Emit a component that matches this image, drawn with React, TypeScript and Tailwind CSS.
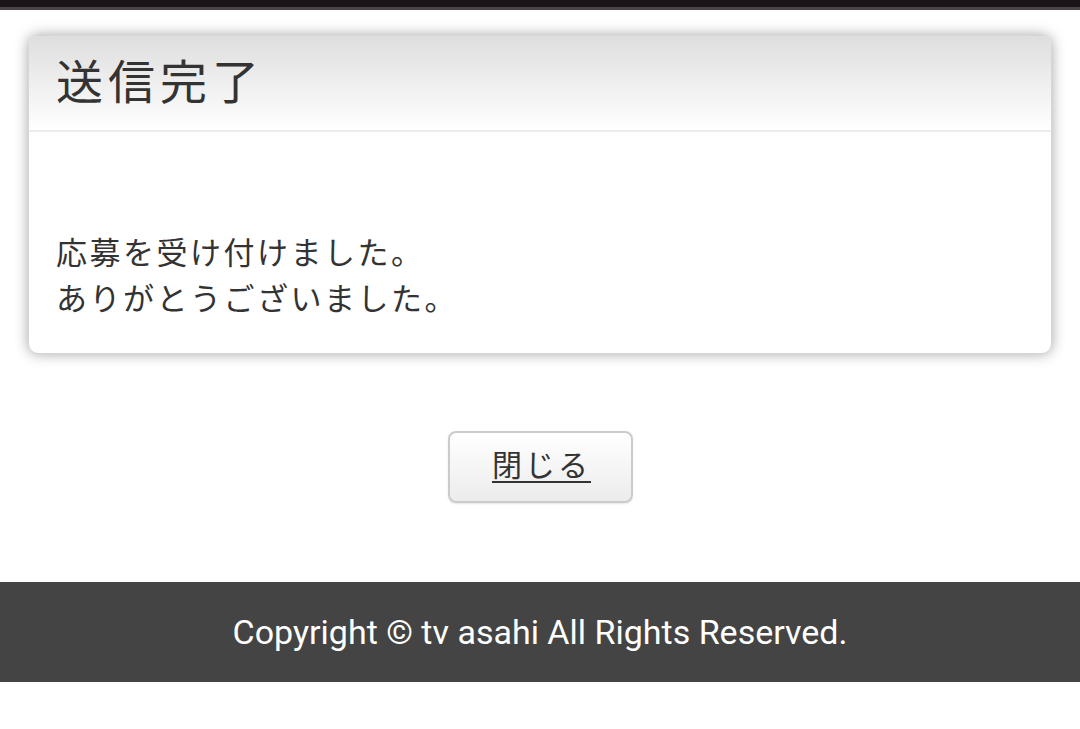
import React from 'react';

const jp = { fontFamily: '"Noto Sans CJK JP", "Noto Sans", sans-serif' };

export default function App() {
  return (
    <div className="min-h-[729px] bg-white" style={jp}>
      {/* top bar */}
      <div className="h-[7px] bg-[#1b1317]" />
      <div className="h-[3px] bg-[#4a4547]" />

      <main className="px-[28px] pt-[25px]">
        {/* result card */}
        <section className="rounded-[10px] border border-[#d6d6d6] bg-white shadow-[0_0_14px_rgba(0,0,0,0.35)] overflow-hidden">
          <div className="h-[96px] flex items-center px-[27px] bg-gradient-to-b from-[#dedede] to-white border-b-2 border-[#ececec]">
            <h1 className="text-[47px] leading-none tracking-[5px] text-[#333] pb-[10px]">送信完了</h1>
          </div>
          <div className="px-[27px] pt-[96px] pb-[33px] text-[31px] leading-[46px] tracking-[2.5px] text-[#333]">
            <p>応募を受け付けました。</p>
            <p>ありがとうございました。</p>
          </div>
        </section>

        <div className="flex justify-center pt-[77px] pb-[79px]">
          <button className="w-[185px] h-[72px] rounded-[8px] border-2 border-[#cbcbcb] bg-gradient-to-b from-white to-[#ececec] shadow-[0_1px_2px_rgba(0,0,0,0.1)] text-[30px] tracking-[3px] text-[#333] underline underline-offset-[5px] decoration-2 pb-[8px] pl-[3px]">
            閉じる
          </button>
        </div>
      </main>

      <footer
        className="h-[100px] bg-[#444444] flex items-center justify-center text-white text-[34px]"
        style={{ fontFamily: 'Roboto, "Liberation Sans", sans-serif' }}
      >
        Copyright © tv asahi All Rights Reserved.
      </footer>
    </div>
  );
}
